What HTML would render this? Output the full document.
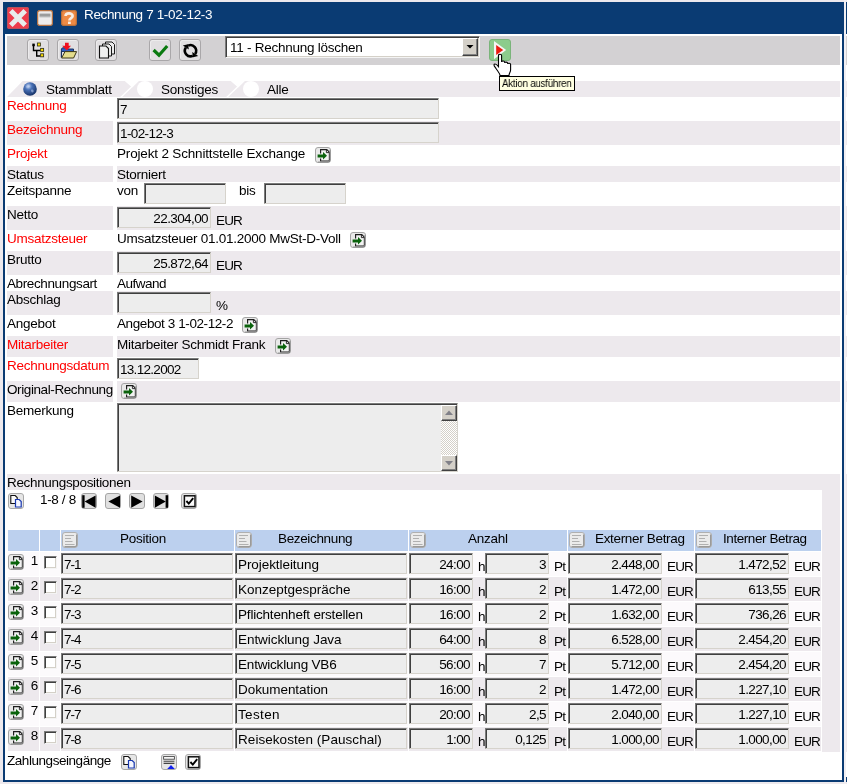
<!DOCTYPE html>
<html><head><meta charset="utf-8"><title>Rechnung</title><style>
*{box-sizing:border-box;margin:0;padding:0}
html,body{width:847px;height:784px;overflow:hidden;background:#ede9ed;}
body{position:relative;font-family:"Liberation Sans",sans-serif;font-size:13.5px;letter-spacing:-0.25px;color:#000;line-height:15px}
.a{position:absolute}
.t{position:absolute;will-change:transform;white-space:nowrap;line-height:15px;height:15px}
.r{color:#f00}
.in{position:absolute;will-change:transform;background:#ededed;border:1px solid;border-color:#7b7b7b #d6d3cc #d6d3cc #7b7b7b;box-shadow:inset 1px 1px 0 #3f3f3f;white-space:nowrap;overflow:hidden;line-height:15px;padding:3px 2px 0 2px;height:21px}
.num{text-align:right;letter-spacing:-0.6px}
.lav{position:absolute;background:#ede9ed}
.wh{position:absolute;background:#fff}
.btn{position:absolute;width:22px;height:22px;border:1px solid #a9a7a9;border-radius:3px;background:#e1dfe1;box-shadow:inset 1px 1px 0 #ecebec}
.ib{position:absolute;width:16px;height:15px}
.cb{position:absolute;width:13px;height:13px;background:#fff;border:1px solid;border-color:#7b7b7b #f4f4f4 #f4f4f4 #7b7b7b;box-shadow:inset 1px 1px 0 #3f3f3f, inset -1px -1px 0 #d4d0c8}
</style></head><body>
<div class="a" style="left:3px;top:2px;width:841px;height:780px;background:#0a3b73"></div>
<div class="a" style="left:5px;top:33.5px;width:837px;height:746.5px;background:#fff"></div>
<div class="a" style="left:844px;top:0;width:2px;height:784px;background:#f2eff2"></div>
<div class="a" style="left:846px;top:2px;width:1px;height:31.5px;background:#0a3b73"></div>
<div class="a" style="left:846px;top:33.5px;width:1px;height:746px;background:#fff"></div>
<div class="a" style="left:846px;top:36px;width:1px;height:28.5px;background:#d3d1d3"></div>
<div class="a" style="left:846px;top:777px;width:1px;height:5px;background:#0a3b73"></div>
<svg class="a" style="left:7px;top:7px" width="22" height="22" viewBox="0 0 22 22"><rect x="0" y="0" width="22" height="22" rx="2" fill="#ee3c4c"/><rect x="0.5" y="0.5" width="21" height="21" rx="2" fill="none" stroke="#b8525c" stroke-width="1"/><path d="M3.8 3.8 L18.2 18.2 M18.2 3.8 L3.8 18.2" stroke="#e9eded" stroke-width="5" stroke-linecap="butt"/></svg>
<svg class="a" style="left:37px;top:10px" width="16" height="16" viewBox="0 0 16 16"><rect x="0.6" y="0.6" width="14.8" height="14.8" rx="2" fill="#eeecec" stroke="#b87444" stroke-width="1.3"/><rect x="2.5" y="3.6" width="11" height="3.2" fill="#9c9c9c"/><rect x="2.5" y="6.8" width="11" height="1.2" fill="#d8d8d8"/></svg>
<svg class="a" style="left:61px;top:10px" width="16" height="16" viewBox="0 0 16 16"><rect x="0.6" y="0.6" width="14.8" height="14.8" rx="2" fill="#ee8a44" stroke="#b8703c" stroke-width="1.3"/><path d="M4.6 6 C4.6 2.6 11.6 2.6 11.6 5.9 C11.6 8.2 8.4 8 8.4 10.6" fill="none" stroke="#f6eee6" stroke-width="2.7"/><rect x="7" y="11.6" width="2.8" height="2.4" fill="#f6eee6"/></svg>
<div class="t" style="left:83.5px;top:7px;color:#fff;letter-spacing:-0.35px">Rechnung 7 1-02-12-3</div>
<div class="a" style="left:7px;top:36px;width:833px;height:28.5px;background:#d3d1d3"></div>
<div class="btn" style="left:27px;top:39px"></div><svg class="a" style="left:27px;top:39px" width="22" height="22" viewBox="0 0 22 22"><path d="M6.5 6 V11.5 H9.7 V17 H13.4 M9.7 11.5 H13.4" fill="none" stroke="#000" stroke-width="1.4"/><rect x="5.3" y="4.6" width="2.5" height="2.6" fill="#000"/><rect x="10.4" y="4" width="3" height="3" fill="#ffe000" stroke="#3a3a20" stroke-width="0.9"/><rect x="13.6" y="9.4" width="3" height="3" fill="#ffe000" stroke="#3a3a20" stroke-width="0.9"/><rect x="13.6" y="14.8" width="3" height="3" fill="#ffe000" stroke="#3a3a20" stroke-width="0.9"/></svg>
<div class="btn" style="left:57px;top:39px"></div><svg class="a" style="left:57px;top:39px" width="22" height="22" viewBox="0 0 22 22"><path d="M4.4 18.5 V10 L5.5 8.8 H9.5 L10.5 10 H16.5 V12.5 H4.4 Z" fill="#2a5cc0" stroke="#102858" stroke-width="0.9"/><path d="M4.6 19 L8 12.6 H19.6 L16.6 19 Z" fill="#e4dc8c" stroke="#3c3818" stroke-width="1"/><path d="M8 3.7 H11.7 V6.8 H14 L9.85 11.6 L5.2 6.8 H8 Z" fill="#f01020"/></svg>
<div class="btn" style="left:95px;top:39px"></div><svg class="a" style="left:95px;top:39px" width="22" height="22" viewBox="0 0 22 22"><path d="M10.5 3 H17 L19.5 5.5 V15 H10.5 Z" fill="#ececec" stroke="#1a1a1a" stroke-width="1"/><path d="M7.5 5 H14 L16.5 7.5 V17 H7.5 Z" fill="#ececec" stroke="#1a1a1a" stroke-width="1"/><path d="M4.5 7 H11 L13.5 9.5 V19 H4.5 Z" fill="#efefef" stroke="#101010" stroke-width="1.1"/></svg>
<div class="btn" style="left:149px;top:39px"></div><svg class="a" style="left:149px;top:39px" width="22" height="22" viewBox="0 0 22 22"><path d="M4.6 11 L10 16.2 L18.2 7" fill="none" stroke="#0a7a10" stroke-width="3.2"/></svg>
<div class="btn" style="left:179px;top:39px"></div><svg class="a" style="left:179px;top:39px" width="22" height="22" viewBox="0 0 22 22"><path d="M9.13 6.62 A5.6 5.6 0 0 1 16.09 14.91" fill="none" stroke="#000" stroke-width="2.6"/><path d="M13.87 16.78 A5.6 5.6 0 0 1 6.91 8.49" fill="none" stroke="#000" stroke-width="2.6"/><path d="M14.0 18.2 L19.2 16.9 L13.2 12.9 Z" fill="#000"/><path d="M9.0 5.2 L3.8 6.5 L9.8 10.5 Z" fill="#000"/></svg>
<div class="a" style="left:225px;top:36px;width:255px;height:22px;background:#fff;border:1px solid;border-color:#7b7b7b #f4f4f4 #f4f4f4 #7b7b7b;box-shadow:inset 1px 1px 0 #3f3f3f, inset -1px -1px 0 #d4d0c8"></div>
<div class="t" style="left:229.5px;top:39.5px">11 - Rechnung löschen</div>
<div class="a" style="left:462px;top:38px;width:16px;height:18px;background:#d4d0c8;border:1px solid;border-color:#fff #404040 #404040 #fff;box-shadow:inset -1px -1px 0 #808080"></div>
<svg class="a" style="left:462px;top:38px" width="16" height="18" viewBox="0 0 16 18"><path d="M4.5 7 H11.5 L8 10.5 Z" fill="#000"/></svg>
<svg class="a" style="left:489px;top:39px" width="22" height="22" viewBox="0 0 22 22"><rect x="0.5" y="0.5" width="21" height="21" rx="2.5" fill="#8ccc8c" stroke="#7ab47a" stroke-width="1"/><path d="M5 2 L17.2 11 L5 20.2 Z" fill="#f4f6f4"/><path d="M7.2 6 L14.2 11 L7.2 16 Z" fill="#e81c10"/></svg>
<div class="lav" style="left:7px;top:81px;width:833px;height:16px"></div>
<div class="lav" style="left:846px;top:81px;width:1px;height:16px"></div>
<div class="lav" style="left:846px;top:474px;width:1px;height:278px"></div>
<svg class="a" style="left:7px;top:81px" width="270" height="16" viewBox="0 0 270 16"><path d="M0 0 H15.7 L0 16 Z" fill="#fff"/><path d="M117.7 0 H131.6 L125.2 6.6 Z" fill="#fff"/><path d="M129.8 0 H131.8 L115.2 16 H113.2 Z" fill="#fff"/><circle cx="138" cy="8" r="8" fill="#fff"/><path d="M223.7 0 H237.6 L231.2 6.6 Z" fill="#fff"/><path d="M235.8 0 H237.8 L221.2 16 H219.2 Z" fill="#fff"/><circle cx="244" cy="8" r="8" fill="#fff"/></svg>
<svg class="a" style="left:23px;top:81.5px" width="14" height="14" viewBox="0 0 14 14"><defs><radialGradient id="gl" cx="0.38" cy="0.3" r="0.75"><stop offset="0" stop-color="#c8d8f4"/><stop offset="0.35" stop-color="#4a72b8"/><stop offset="1" stop-color="#122c60"/></radialGradient></defs><circle cx="7" cy="7" r="6.8" fill="url(#gl)"/><path d="M3 5 C4 3 6 2.5 7 4 C6 6 4.5 6.5 3 5 Z M8 8 C10 7 11 8 10.5 10 C9 11 8 10 8 8 Z" fill="#b8c8ec" opacity="0.55"/></svg>
<div class="t" style="left:46px;top:82px">Stammblatt</div>
<div class="t" style="left:161px;top:82px">Sonstiges</div>
<div class="t" style="left:267px;top:82px">Alle</div>
<div class="t r" style="left:7px;top:98px">Rechnung</div>
<div class="lav" style="left:846px;top:121px;width:1px;height:24px"></div>
<div class="lav" style="left:7px;top:121px;width:106px;height:24px"></div>
<div class="lav" style="left:117px;top:121px;width:723px;height:24px"></div>
<div class="t r" style="left:7px;top:122px">Bezeichnung</div>
<div class="t r" style="left:7px;top:146px">Projekt</div>
<div class="lav" style="left:846px;top:166px;width:1px;height:16px"></div>
<div class="lav" style="left:7px;top:166px;width:106px;height:16px"></div>
<div class="lav" style="left:117px;top:166px;width:723px;height:16px"></div>
<div class="t" style="left:7px;top:167px">Status</div>
<div class="t" style="left:7px;top:183px">Zeitspanne</div>
<div class="lav" style="left:846px;top:206px;width:1px;height:24px"></div>
<div class="lav" style="left:7px;top:206px;width:106px;height:24px"></div>
<div class="lav" style="left:117px;top:206px;width:723px;height:24px"></div>
<div class="t" style="left:7px;top:207px">Netto</div>
<div class="t r" style="left:7px;top:231px">Umsatzsteuer</div>
<div class="lav" style="left:846px;top:251px;width:1px;height:24px"></div>
<div class="lav" style="left:7px;top:251px;width:106px;height:24px"></div>
<div class="lav" style="left:117px;top:251px;width:723px;height:24px"></div>
<div class="t" style="left:7px;top:252px">Brutto</div>
<div class="t" style="left:7px;top:276px;letter-spacing:-0.38px">Abrechnungsart</div>
<div class="lav" style="left:846px;top:291px;width:1px;height:24px"></div>
<div class="lav" style="left:7px;top:291px;width:106px;height:24px"></div>
<div class="lav" style="left:117px;top:291px;width:723px;height:24px"></div>
<div class="t" style="left:7px;top:292px">Abschlag</div>
<div class="t" style="left:7px;top:316px">Angebot</div>
<div class="lav" style="left:846px;top:336px;width:1px;height:21px"></div>
<div class="lav" style="left:7px;top:336px;width:106px;height:21px"></div>
<div class="lav" style="left:117px;top:336px;width:723px;height:21px"></div>
<div class="t r" style="left:7px;top:337px">Mitarbeiter</div>
<div class="t r" style="left:7px;top:358px">Rechnungsdatum</div>
<div class="lav" style="left:846px;top:381px;width:1px;height:21px"></div>
<div class="lav" style="left:7px;top:381px;width:106px;height:21px"></div>
<div class="lav" style="left:117px;top:381px;width:723px;height:21px"></div>
<div class="t" style="left:7px;top:382px;letter-spacing:-0.4px">Original-Rechnung</div>
<div class="t" style="left:7px;top:403px">Bemerkung</div>
<div class="in" style="left:117px;top:98px;width:322px">7</div>
<div class="in" style="left:117px;top:122px;width:322px;letter-spacing:-0.6px">1-02-12-3</div>
<div class="t" style="left:117px;top:146px;letter-spacing:-0.17px">Projekt 2 Schnittstelle Exchange</div>
<svg class="a" style="left:315px;top:147px" width="16" height="16" viewBox="0 0 16 16"><rect x="0.5" y="0.5" width="15" height="15" rx="2.5" fill="#e9e9e9" stroke="#a4a4a4"/><path d="M5.6 6.4 V2.6 H11.8 L14.4 5.2 V14 H5.6 V11.4" fill="#f2f2f2" stroke="#1c1c1c" stroke-width="1.15"/><path d="M11.4 2.6 V5.6 H14.4" fill="none" stroke="#1c1c1c" stroke-width="0.9"/><path d="M2.6 7.4 H8 V5 L12 8.8 L8 12.6 V10.4 H2.6 Z" fill="#0a620c"/><path d="M14.9 3 V12.8 Q14.9 15 12.8 15 H3" fill="none" stroke="#8e8e8e" stroke-width="0.9"/></svg>
<div class="t" style="left:117px;top:167px">Storniert</div>
<div class="t" style="left:117px;top:183px">von</div>
<div class="in" style="left:144px;top:183px;width:82px"></div>
<div class="t" style="left:239px;top:183px">bis</div>
<div class="in" style="left:264px;top:183px;width:82px"></div>
<div class="in num" style="left:117px;top:207px;width:94px">22.304,00</div>
<div class="t" style="left:216px;top:213px;letter-spacing:-0.85px">EUR</div>
<div class="t" style="left:117px;top:231px">Umsatzsteuer 01.01.2000 MwSt-D-Voll</div>
<svg class="a" style="left:350px;top:232px" width="16" height="16" viewBox="0 0 16 16"><rect x="0.5" y="0.5" width="15" height="15" rx="2.5" fill="#e9e9e9" stroke="#a4a4a4"/><path d="M5.6 6.4 V2.6 H11.8 L14.4 5.2 V14 H5.6 V11.4" fill="#f2f2f2" stroke="#1c1c1c" stroke-width="1.15"/><path d="M11.4 2.6 V5.6 H14.4" fill="none" stroke="#1c1c1c" stroke-width="0.9"/><path d="M2.6 7.4 H8 V5 L12 8.8 L8 12.6 V10.4 H2.6 Z" fill="#0a620c"/><path d="M14.9 3 V12.8 Q14.9 15 12.8 15 H3" fill="none" stroke="#8e8e8e" stroke-width="0.9"/></svg>
<div class="in num" style="left:117px;top:252px;width:94px">25.872,64</div>
<div class="t" style="left:216px;top:258px;letter-spacing:-0.85px">EUR</div>
<div class="t" style="left:117px;top:276px;letter-spacing:-0.5px">Aufwand</div>
<div class="in" style="left:117px;top:292px;width:94px"></div>
<div class="t" style="left:216px;top:298px">%</div>
<div class="t" style="left:117px;top:316px;letter-spacing:-0.41px">Angebot 3 1-02-12-2</div>
<svg class="a" style="left:242px;top:317px" width="16" height="16" viewBox="0 0 16 16"><rect x="0.5" y="0.5" width="15" height="15" rx="2.5" fill="#e9e9e9" stroke="#a4a4a4"/><path d="M5.6 6.4 V2.6 H11.8 L14.4 5.2 V14 H5.6 V11.4" fill="#f2f2f2" stroke="#1c1c1c" stroke-width="1.15"/><path d="M11.4 2.6 V5.6 H14.4" fill="none" stroke="#1c1c1c" stroke-width="0.9"/><path d="M2.6 7.4 H8 V5 L12 8.8 L8 12.6 V10.4 H2.6 Z" fill="#0a620c"/><path d="M14.9 3 V12.8 Q14.9 15 12.8 15 H3" fill="none" stroke="#8e8e8e" stroke-width="0.9"/></svg>
<div class="t" style="left:117px;top:337px">Mitarbeiter Schmidt Frank</div>
<svg class="a" style="left:275px;top:338px" width="16" height="16" viewBox="0 0 16 16"><rect x="0.5" y="0.5" width="15" height="15" rx="2.5" fill="#e9e9e9" stroke="#a4a4a4"/><path d="M5.6 6.4 V2.6 H11.8 L14.4 5.2 V14 H5.6 V11.4" fill="#f2f2f2" stroke="#1c1c1c" stroke-width="1.15"/><path d="M11.4 2.6 V5.6 H14.4" fill="none" stroke="#1c1c1c" stroke-width="0.9"/><path d="M2.6 7.4 H8 V5 L12 8.8 L8 12.6 V10.4 H2.6 Z" fill="#0a620c"/><path d="M14.9 3 V12.8 Q14.9 15 12.8 15 H3" fill="none" stroke="#8e8e8e" stroke-width="0.9"/></svg>
<div class="in" style="left:117px;top:358px;width:82px;letter-spacing:-0.7px">13.12.2002</div>
<svg class="a" style="left:121px;top:383px" width="16" height="16" viewBox="0 0 16 16"><rect x="0.5" y="0.5" width="15" height="15" rx="2.5" fill="#e9e9e9" stroke="#a4a4a4"/><path d="M5.6 6.4 V2.6 H11.8 L14.4 5.2 V14 H5.6 V11.4" fill="#f2f2f2" stroke="#1c1c1c" stroke-width="1.15"/><path d="M11.4 2.6 V5.6 H14.4" fill="none" stroke="#1c1c1c" stroke-width="0.9"/><path d="M2.6 7.4 H8 V5 L12 8.8 L8 12.6 V10.4 H2.6 Z" fill="#0a620c"/><path d="M14.9 3 V12.8 Q14.9 15 12.8 15 H3" fill="none" stroke="#8e8e8e" stroke-width="0.9"/></svg>
<div class="in" style="left:117px;top:403px;width:341px;height:69px"></div>
<div class="a" style="left:441px;top:405px;width:16px;height:66px;background:conic-gradient(#fff 25%, #d4d0c8 0 50%, #fff 0 75%, #d4d0c8 0) 0 0/2px 2px"></div>
<div class="a" style="left:441px;top:405px;width:16px;height:16px;background:#d4d0c8;border:1px solid;border-color:#fff #404040 #404040 #fff;box-shadow:inset -1px -1px 0 #808080"></div>
<svg class="a" style="left:441px;top:405px" width="16" height="16" viewBox="0 0 16 16"><path d="M4 10 L8 5.5 L12 10 Z" fill="#808088"/></svg>
<div class="a" style="left:441px;top:455px;width:16px;height:16px;background:#d4d0c8;border:1px solid;border-color:#fff #404040 #404040 #fff;box-shadow:inset -1px -1px 0 #808080"></div>
<svg class="a" style="left:441px;top:455px" width="16" height="16" viewBox="0 0 16 16"><path d="M4 6 L8 10.5 L12 6 Z" fill="#808088"/></svg>
<div class="lav" style="left:7px;top:474px;width:833px;height:278px"></div>
<div class="t" style="left:7px;top:475px;letter-spacing:-0.33px">Rechnungspositionen</div>
<div class="wh" style="left:7px;top:490px;width:815px;height:262px"></div>
<svg class="a" style="left:8px;top:493px" width="16" height="16" viewBox="0 0 16 16"><rect x="0.5" y="0.5" width="15" height="15" rx="2.5" fill="#e6e6e6" stroke="#a8a8a8"/><path d="M2.8 2.5 H7.2 L9.2 4.5 V10.5 H2.8 Z" fill="#fafafa" stroke="#111" stroke-width="1.1"/><path d="M7.5 6.5 H11.2 L13.2 8.5 V14 H7.5 Z" fill="#f4f6ff" stroke="#1838b0" stroke-width="1.2"/></svg>
<div class="t" style="left:40px;top:491.5px;letter-spacing:-0.35px">1-8 / 8</div>
<svg class="a" style="left:81px;top:493px" width="16" height="16" viewBox="0 0 16 16"><rect x="0.5" y="0.5" width="15" height="15" rx="2.5" fill="#e0e0e0" stroke="#a4a4a4"/><rect x="1.2" y="2.2" width="2.4" height="12.6" fill="#000"/><path d="M14.6 2.4 V14.8 L3.6 8.6 Z" fill="#000"/></svg>
<svg class="a" style="left:105px;top:493px" width="16" height="16" viewBox="0 0 16 16"><rect x="0.5" y="0.5" width="15" height="15" rx="2.5" fill="#e0e0e0" stroke="#a4a4a4"/><path d="M15 2.4 V14.8 L3.4 8.6 Z" fill="#000"/></svg>
<svg class="a" style="left:129px;top:493px" width="16" height="16" viewBox="0 0 16 16"><rect x="0.5" y="0.5" width="15" height="15" rx="2.5" fill="#e0e0e0" stroke="#a4a4a4"/><path d="M2.2 2.4 V14.8 L13.6 8.6 Z" fill="#000"/></svg>
<svg class="a" style="left:153px;top:493px" width="16" height="16" viewBox="0 0 16 16"><rect x="0.5" y="0.5" width="15" height="15" rx="2.5" fill="#e0e0e0" stroke="#a4a4a4"/><rect x="12.6" y="2.2" width="2.4" height="12.6" fill="#000"/><path d="M1.8 2.4 V14.8 L12.8 8.6 Z" fill="#000"/></svg>
<svg class="a" style="left:181px;top:493px" width="16" height="16" viewBox="0 0 16 16"><rect x="0.5" y="0.5" width="15" height="15" rx="2.5" fill="#e6e6e6" stroke="#a8a8a8"/><rect x="3.4" y="2.8" width="10.6" height="10.8" fill="#fafafa" stroke="#111" stroke-width="1.5"/><path d="M5.4 8 L7.8 10.6 L12.2 5.2" fill="none" stroke="#000" stroke-width="1.9"/></svg>
<div class="a" style="left:8px;top:530px;width:31px;height:21px;background:#bcd0ee"></div>
<div class="a" style="left:40px;top:530px;width:20px;height:21px;background:#bcd0ee"></div>
<div class="a" style="left:61px;top:530px;width:173px;height:21px;background:#bcd0ee"></div>
<svg class="a" style="left:61.5px;top:532px" width="16" height="16" viewBox="0 0 16 16"><rect x="0.5" y="0.5" width="15" height="15" rx="2.5" fill="#ebebeb" stroke="#b0b0b0"/><path d="M14.6 2.5 V13 Q14.6 14.6 13 14.6 H2.5" fill="none" stroke="#9a9a9a" stroke-width="1.2"/><path d="M3 3.5 H12 M3 6.5 H9 M3 9.5 H10.5 M3 12.5 H12.5" stroke="#b0b0b0" stroke-width="1.2"/></svg>
<div class="t" style="left:119.5px;top:531px;letter-spacing:-0.25px">Position</div>
<div class="a" style="left:235px;top:530px;width:173px;height:21px;background:#bcd0ee"></div>
<svg class="a" style="left:235.5px;top:532px" width="16" height="16" viewBox="0 0 16 16"><rect x="0.5" y="0.5" width="15" height="15" rx="2.5" fill="#ebebeb" stroke="#b0b0b0"/><path d="M14.6 2.5 V13 Q14.6 14.6 13 14.6 H2.5" fill="none" stroke="#9a9a9a" stroke-width="1.2"/><path d="M3 3.5 H12 M3 6.5 H9 M3 9.5 H10.5 M3 12.5 H12.5" stroke="#b0b0b0" stroke-width="1.2"/></svg>
<div class="t" style="left:277.5px;top:531px;letter-spacing:-0.35px">Bezeichnung</div>
<div class="a" style="left:409px;top:530px;width:158px;height:21px;background:#bcd0ee"></div>
<svg class="a" style="left:409.5px;top:532px" width="16" height="16" viewBox="0 0 16 16"><rect x="0.5" y="0.5" width="15" height="15" rx="2.5" fill="#ebebeb" stroke="#b0b0b0"/><path d="M14.6 2.5 V13 Q14.6 14.6 13 14.6 H2.5" fill="none" stroke="#9a9a9a" stroke-width="1.2"/><path d="M3 3.5 H12 M3 6.5 H9 M3 9.5 H10.5 M3 12.5 H12.5" stroke="#b0b0b0" stroke-width="1.2"/></svg>
<div class="t" style="left:468px;top:531px;letter-spacing:-0.25px">Anzahl</div>
<div class="a" style="left:568px;top:530px;width:126px;height:21px;background:#bcd0ee"></div>
<svg class="a" style="left:568.5px;top:532px" width="16" height="16" viewBox="0 0 16 16"><rect x="0.5" y="0.5" width="15" height="15" rx="2.5" fill="#ebebeb" stroke="#b0b0b0"/><path d="M14.6 2.5 V13 Q14.6 14.6 13 14.6 H2.5" fill="none" stroke="#9a9a9a" stroke-width="1.2"/><path d="M3 3.5 H12 M3 6.5 H9 M3 9.5 H10.5 M3 12.5 H12.5" stroke="#b0b0b0" stroke-width="1.2"/></svg>
<div class="t" style="left:594.5px;top:531px;letter-spacing:-0.33px">Externer Betrag</div>
<div class="a" style="left:695px;top:530px;width:126px;height:21px;background:#bcd0ee"></div>
<svg class="a" style="left:695.5px;top:532px" width="16" height="16" viewBox="0 0 16 16"><rect x="0.5" y="0.5" width="15" height="15" rx="2.5" fill="#ebebeb" stroke="#b0b0b0"/><path d="M14.6 2.5 V13 Q14.6 14.6 13 14.6 H2.5" fill="none" stroke="#9a9a9a" stroke-width="1.2"/><path d="M3 3.5 H12 M3 6.5 H9 M3 9.5 H10.5 M3 12.5 H12.5" stroke="#b0b0b0" stroke-width="1.2"/></svg>
<div class="t" style="left:723px;top:531px;letter-spacing:-0.43px">Interner Betrag</div>
<div class="a" style="left:8px;top:552px;width:31px;height:24px;background:#fcfafc"></div>
<div class="a" style="left:40px;top:552px;width:20px;height:24px;background:#fcfafc"></div>
<div class="a" style="left:61px;top:552px;width:173px;height:24px;background:#fcfafc"></div>
<div class="a" style="left:235px;top:552px;width:173px;height:24px;background:#fcfafc"></div>
<div class="a" style="left:409px;top:552px;width:158px;height:24px;background:#fcfafc"></div>
<div class="a" style="left:568px;top:552px;width:126px;height:24px;background:#fcfafc"></div>
<div class="a" style="left:695px;top:552px;width:126px;height:24px;background:#fcfafc"></div>
<svg class="a" style="left:8px;top:554px" width="16" height="16" viewBox="0 0 16 16"><rect x="0.5" y="0.5" width="15" height="15" rx="2.5" fill="#e9e9e9" stroke="#a4a4a4"/><path d="M5.6 6.4 V2.6 H11.8 L14.4 5.2 V14 H5.6 V11.4" fill="#f2f2f2" stroke="#1c1c1c" stroke-width="1.15"/><path d="M11.4 2.6 V5.6 H14.4" fill="none" stroke="#1c1c1c" stroke-width="0.9"/><path d="M2.6 7.4 H8 V5 L12 8.8 L8 12.6 V10.4 H2.6 Z" fill="#0a620c"/><path d="M14.9 3 V12.8 Q14.9 15 12.8 15 H3" fill="none" stroke="#8e8e8e" stroke-width="0.9"/></svg>
<div class="t" style="left:27px;top:553px;width:11px;text-align:right">1</div>
<div class="cb" style="left:44px;top:556px"></div>
<div class="in" style="left:61px;top:553px;width:172px;letter-spacing:-1px">7-1</div>
<div class="in" style="left:235px;top:553px;width:172px;letter-spacing:-0.07px">Projektleitung</div>
<div class="in num" style="left:409px;top:553px;width:64px">24:00</div>
<div class="t" style="left:478px;top:558.5px">h</div>
<div class="in num" style="left:485px;top:553px;width:64px">3</div>
<div class="t" style="left:553.5px;top:558.5px;letter-spacing:-0.65px">Pt</div>
<div class="in num" style="left:568px;top:553px;width:94px">2.448,00</div>
<div class="t" style="left:666.5px;top:558.5px;letter-spacing:-0.85px">EUR</div>
<div class="in num" style="left:695px;top:553px;width:94px">1.472,52</div>
<div class="t" style="left:793.5px;top:558.5px;letter-spacing:-0.85px">EUR</div>
<div class="a" style="left:8px;top:577px;width:31px;height:24px;background:#ede9ed"></div>
<div class="a" style="left:40px;top:577px;width:20px;height:24px;background:#ede9ed"></div>
<div class="a" style="left:61px;top:577px;width:173px;height:24px;background:#ede9ed"></div>
<div class="a" style="left:235px;top:577px;width:173px;height:24px;background:#ede9ed"></div>
<div class="a" style="left:409px;top:577px;width:158px;height:24px;background:#ede9ed"></div>
<div class="a" style="left:568px;top:577px;width:126px;height:24px;background:#ede9ed"></div>
<div class="a" style="left:695px;top:577px;width:126px;height:24px;background:#ede9ed"></div>
<svg class="a" style="left:8px;top:579px" width="16" height="16" viewBox="0 0 16 16"><rect x="0.5" y="0.5" width="15" height="15" rx="2.5" fill="#e9e9e9" stroke="#a4a4a4"/><path d="M5.6 6.4 V2.6 H11.8 L14.4 5.2 V14 H5.6 V11.4" fill="#f2f2f2" stroke="#1c1c1c" stroke-width="1.15"/><path d="M11.4 2.6 V5.6 H14.4" fill="none" stroke="#1c1c1c" stroke-width="0.9"/><path d="M2.6 7.4 H8 V5 L12 8.8 L8 12.6 V10.4 H2.6 Z" fill="#0a620c"/><path d="M14.9 3 V12.8 Q14.9 15 12.8 15 H3" fill="none" stroke="#8e8e8e" stroke-width="0.9"/></svg>
<div class="t" style="left:27px;top:578px;width:11px;text-align:right">2</div>
<div class="cb" style="left:44px;top:581px"></div>
<div class="in" style="left:61px;top:578px;width:172px;letter-spacing:-1px">7-2</div>
<div class="in" style="left:235px;top:578px;width:172px;letter-spacing:0px">Konzeptgespräche</div>
<div class="in num" style="left:409px;top:578px;width:64px">16:00</div>
<div class="t" style="left:478px;top:583.5px">h</div>
<div class="in num" style="left:485px;top:578px;width:64px">2</div>
<div class="t" style="left:553.5px;top:583.5px;letter-spacing:-0.65px">Pt</div>
<div class="in num" style="left:568px;top:578px;width:94px">1.472,00</div>
<div class="t" style="left:666.5px;top:583.5px;letter-spacing:-0.85px">EUR</div>
<div class="in num" style="left:695px;top:578px;width:94px">613,55</div>
<div class="t" style="left:793.5px;top:583.5px;letter-spacing:-0.85px">EUR</div>
<div class="a" style="left:8px;top:602px;width:31px;height:24px;background:#fcfafc"></div>
<div class="a" style="left:40px;top:602px;width:20px;height:24px;background:#fcfafc"></div>
<div class="a" style="left:61px;top:602px;width:173px;height:24px;background:#fcfafc"></div>
<div class="a" style="left:235px;top:602px;width:173px;height:24px;background:#fcfafc"></div>
<div class="a" style="left:409px;top:602px;width:158px;height:24px;background:#fcfafc"></div>
<div class="a" style="left:568px;top:602px;width:126px;height:24px;background:#fcfafc"></div>
<div class="a" style="left:695px;top:602px;width:126px;height:24px;background:#fcfafc"></div>
<svg class="a" style="left:8px;top:604px" width="16" height="16" viewBox="0 0 16 16"><rect x="0.5" y="0.5" width="15" height="15" rx="2.5" fill="#e9e9e9" stroke="#a4a4a4"/><path d="M5.6 6.4 V2.6 H11.8 L14.4 5.2 V14 H5.6 V11.4" fill="#f2f2f2" stroke="#1c1c1c" stroke-width="1.15"/><path d="M11.4 2.6 V5.6 H14.4" fill="none" stroke="#1c1c1c" stroke-width="0.9"/><path d="M2.6 7.4 H8 V5 L12 8.8 L8 12.6 V10.4 H2.6 Z" fill="#0a620c"/><path d="M14.9 3 V12.8 Q14.9 15 12.8 15 H3" fill="none" stroke="#8e8e8e" stroke-width="0.9"/></svg>
<div class="t" style="left:27px;top:603px;width:11px;text-align:right">3</div>
<div class="cb" style="left:44px;top:606px"></div>
<div class="in" style="left:61px;top:603px;width:172px;letter-spacing:-1px">7-3</div>
<div class="in" style="left:235px;top:603px;width:172px;letter-spacing:-0.19px">Pflichtenheft erstellen</div>
<div class="in num" style="left:409px;top:603px;width:64px">16:00</div>
<div class="t" style="left:478px;top:608.5px">h</div>
<div class="in num" style="left:485px;top:603px;width:64px">2</div>
<div class="t" style="left:553.5px;top:608.5px;letter-spacing:-0.65px">Pt</div>
<div class="in num" style="left:568px;top:603px;width:94px">1.632,00</div>
<div class="t" style="left:666.5px;top:608.5px;letter-spacing:-0.85px">EUR</div>
<div class="in num" style="left:695px;top:603px;width:94px">736,26</div>
<div class="t" style="left:793.5px;top:608.5px;letter-spacing:-0.85px">EUR</div>
<div class="a" style="left:8px;top:627px;width:31px;height:24px;background:#ede9ed"></div>
<div class="a" style="left:40px;top:627px;width:20px;height:24px;background:#ede9ed"></div>
<div class="a" style="left:61px;top:627px;width:173px;height:24px;background:#ede9ed"></div>
<div class="a" style="left:235px;top:627px;width:173px;height:24px;background:#ede9ed"></div>
<div class="a" style="left:409px;top:627px;width:158px;height:24px;background:#ede9ed"></div>
<div class="a" style="left:568px;top:627px;width:126px;height:24px;background:#ede9ed"></div>
<div class="a" style="left:695px;top:627px;width:126px;height:24px;background:#ede9ed"></div>
<svg class="a" style="left:8px;top:629px" width="16" height="16" viewBox="0 0 16 16"><rect x="0.5" y="0.5" width="15" height="15" rx="2.5" fill="#e9e9e9" stroke="#a4a4a4"/><path d="M5.6 6.4 V2.6 H11.8 L14.4 5.2 V14 H5.6 V11.4" fill="#f2f2f2" stroke="#1c1c1c" stroke-width="1.15"/><path d="M11.4 2.6 V5.6 H14.4" fill="none" stroke="#1c1c1c" stroke-width="0.9"/><path d="M2.6 7.4 H8 V5 L12 8.8 L8 12.6 V10.4 H2.6 Z" fill="#0a620c"/><path d="M14.9 3 V12.8 Q14.9 15 12.8 15 H3" fill="none" stroke="#8e8e8e" stroke-width="0.9"/></svg>
<div class="t" style="left:27px;top:628px;width:11px;text-align:right">4</div>
<div class="cb" style="left:44px;top:631px"></div>
<div class="in" style="left:61px;top:628px;width:172px;letter-spacing:-1px">7-4</div>
<div class="in" style="left:235px;top:628px;width:172px;letter-spacing:-0.05px">Entwicklung Java</div>
<div class="in num" style="left:409px;top:628px;width:64px">64:00</div>
<div class="t" style="left:478px;top:633.5px">h</div>
<div class="in num" style="left:485px;top:628px;width:64px">8</div>
<div class="t" style="left:553.5px;top:633.5px;letter-spacing:-0.65px">Pt</div>
<div class="in num" style="left:568px;top:628px;width:94px">6.528,00</div>
<div class="t" style="left:666.5px;top:633.5px;letter-spacing:-0.85px">EUR</div>
<div class="in num" style="left:695px;top:628px;width:94px">2.454,20</div>
<div class="t" style="left:793.5px;top:633.5px;letter-spacing:-0.85px">EUR</div>
<div class="a" style="left:8px;top:652px;width:31px;height:24px;background:#fcfafc"></div>
<div class="a" style="left:40px;top:652px;width:20px;height:24px;background:#fcfafc"></div>
<div class="a" style="left:61px;top:652px;width:173px;height:24px;background:#fcfafc"></div>
<div class="a" style="left:235px;top:652px;width:173px;height:24px;background:#fcfafc"></div>
<div class="a" style="left:409px;top:652px;width:158px;height:24px;background:#fcfafc"></div>
<div class="a" style="left:568px;top:652px;width:126px;height:24px;background:#fcfafc"></div>
<div class="a" style="left:695px;top:652px;width:126px;height:24px;background:#fcfafc"></div>
<svg class="a" style="left:8px;top:654px" width="16" height="16" viewBox="0 0 16 16"><rect x="0.5" y="0.5" width="15" height="15" rx="2.5" fill="#e9e9e9" stroke="#a4a4a4"/><path d="M5.6 6.4 V2.6 H11.8 L14.4 5.2 V14 H5.6 V11.4" fill="#f2f2f2" stroke="#1c1c1c" stroke-width="1.15"/><path d="M11.4 2.6 V5.6 H14.4" fill="none" stroke="#1c1c1c" stroke-width="0.9"/><path d="M2.6 7.4 H8 V5 L12 8.8 L8 12.6 V10.4 H2.6 Z" fill="#0a620c"/><path d="M14.9 3 V12.8 Q14.9 15 12.8 15 H3" fill="none" stroke="#8e8e8e" stroke-width="0.9"/></svg>
<div class="t" style="left:27px;top:653px;width:11px;text-align:right">5</div>
<div class="cb" style="left:44px;top:656px"></div>
<div class="in" style="left:61px;top:653px;width:172px;letter-spacing:-1px">7-5</div>
<div class="in" style="left:235px;top:653px;width:172px;letter-spacing:-0.19px">Entwicklung VB6</div>
<div class="in num" style="left:409px;top:653px;width:64px">56:00</div>
<div class="t" style="left:478px;top:658.5px">h</div>
<div class="in num" style="left:485px;top:653px;width:64px">7</div>
<div class="t" style="left:553.5px;top:658.5px;letter-spacing:-0.65px">Pt</div>
<div class="in num" style="left:568px;top:653px;width:94px">5.712,00</div>
<div class="t" style="left:666.5px;top:658.5px;letter-spacing:-0.85px">EUR</div>
<div class="in num" style="left:695px;top:653px;width:94px">2.454,20</div>
<div class="t" style="left:793.5px;top:658.5px;letter-spacing:-0.85px">EUR</div>
<div class="a" style="left:8px;top:677px;width:31px;height:24px;background:#ede9ed"></div>
<div class="a" style="left:40px;top:677px;width:20px;height:24px;background:#ede9ed"></div>
<div class="a" style="left:61px;top:677px;width:173px;height:24px;background:#ede9ed"></div>
<div class="a" style="left:235px;top:677px;width:173px;height:24px;background:#ede9ed"></div>
<div class="a" style="left:409px;top:677px;width:158px;height:24px;background:#ede9ed"></div>
<div class="a" style="left:568px;top:677px;width:126px;height:24px;background:#ede9ed"></div>
<div class="a" style="left:695px;top:677px;width:126px;height:24px;background:#ede9ed"></div>
<svg class="a" style="left:8px;top:679px" width="16" height="16" viewBox="0 0 16 16"><rect x="0.5" y="0.5" width="15" height="15" rx="2.5" fill="#e9e9e9" stroke="#a4a4a4"/><path d="M5.6 6.4 V2.6 H11.8 L14.4 5.2 V14 H5.6 V11.4" fill="#f2f2f2" stroke="#1c1c1c" stroke-width="1.15"/><path d="M11.4 2.6 V5.6 H14.4" fill="none" stroke="#1c1c1c" stroke-width="0.9"/><path d="M2.6 7.4 H8 V5 L12 8.8 L8 12.6 V10.4 H2.6 Z" fill="#0a620c"/><path d="M14.9 3 V12.8 Q14.9 15 12.8 15 H3" fill="none" stroke="#8e8e8e" stroke-width="0.9"/></svg>
<div class="t" style="left:27px;top:678px;width:11px;text-align:right">6</div>
<div class="cb" style="left:44px;top:681px"></div>
<div class="in" style="left:61px;top:678px;width:172px;letter-spacing:-1px">7-6</div>
<div class="in" style="left:235px;top:678px;width:172px;letter-spacing:-0.06px">Dokumentation</div>
<div class="in num" style="left:409px;top:678px;width:64px">16:00</div>
<div class="t" style="left:478px;top:683.5px">h</div>
<div class="in num" style="left:485px;top:678px;width:64px">2</div>
<div class="t" style="left:553.5px;top:683.5px;letter-spacing:-0.65px">Pt</div>
<div class="in num" style="left:568px;top:678px;width:94px">1.472,00</div>
<div class="t" style="left:666.5px;top:683.5px;letter-spacing:-0.85px">EUR</div>
<div class="in num" style="left:695px;top:678px;width:94px">1.227,10</div>
<div class="t" style="left:793.5px;top:683.5px;letter-spacing:-0.85px">EUR</div>
<div class="a" style="left:8px;top:702px;width:31px;height:24px;background:#fcfafc"></div>
<div class="a" style="left:40px;top:702px;width:20px;height:24px;background:#fcfafc"></div>
<div class="a" style="left:61px;top:702px;width:173px;height:24px;background:#fcfafc"></div>
<div class="a" style="left:235px;top:702px;width:173px;height:24px;background:#fcfafc"></div>
<div class="a" style="left:409px;top:702px;width:158px;height:24px;background:#fcfafc"></div>
<div class="a" style="left:568px;top:702px;width:126px;height:24px;background:#fcfafc"></div>
<div class="a" style="left:695px;top:702px;width:126px;height:24px;background:#fcfafc"></div>
<svg class="a" style="left:8px;top:704px" width="16" height="16" viewBox="0 0 16 16"><rect x="0.5" y="0.5" width="15" height="15" rx="2.5" fill="#e9e9e9" stroke="#a4a4a4"/><path d="M5.6 6.4 V2.6 H11.8 L14.4 5.2 V14 H5.6 V11.4" fill="#f2f2f2" stroke="#1c1c1c" stroke-width="1.15"/><path d="M11.4 2.6 V5.6 H14.4" fill="none" stroke="#1c1c1c" stroke-width="0.9"/><path d="M2.6 7.4 H8 V5 L12 8.8 L8 12.6 V10.4 H2.6 Z" fill="#0a620c"/><path d="M14.9 3 V12.8 Q14.9 15 12.8 15 H3" fill="none" stroke="#8e8e8e" stroke-width="0.9"/></svg>
<div class="t" style="left:27px;top:703px;width:11px;text-align:right">7</div>
<div class="cb" style="left:44px;top:706px"></div>
<div class="in" style="left:61px;top:703px;width:172px;letter-spacing:-1px">7-7</div>
<div class="in" style="left:235px;top:703px;width:172px;letter-spacing:0.35px">Testen</div>
<div class="in num" style="left:409px;top:703px;width:64px">20:00</div>
<div class="t" style="left:478px;top:708.5px">h</div>
<div class="in num" style="left:485px;top:703px;width:64px">2,5</div>
<div class="t" style="left:553.5px;top:708.5px;letter-spacing:-0.65px">Pt</div>
<div class="in num" style="left:568px;top:703px;width:94px">2.040,00</div>
<div class="t" style="left:666.5px;top:708.5px;letter-spacing:-0.85px">EUR</div>
<div class="in num" style="left:695px;top:703px;width:94px">1.227,10</div>
<div class="t" style="left:793.5px;top:708.5px;letter-spacing:-0.85px">EUR</div>
<div class="a" style="left:8px;top:727px;width:31px;height:24px;background:#ede9ed"></div>
<div class="a" style="left:40px;top:727px;width:20px;height:24px;background:#ede9ed"></div>
<div class="a" style="left:61px;top:727px;width:173px;height:24px;background:#ede9ed"></div>
<div class="a" style="left:235px;top:727px;width:173px;height:24px;background:#ede9ed"></div>
<div class="a" style="left:409px;top:727px;width:158px;height:24px;background:#ede9ed"></div>
<div class="a" style="left:568px;top:727px;width:126px;height:24px;background:#ede9ed"></div>
<div class="a" style="left:695px;top:727px;width:126px;height:24px;background:#ede9ed"></div>
<svg class="a" style="left:8px;top:729px" width="16" height="16" viewBox="0 0 16 16"><rect x="0.5" y="0.5" width="15" height="15" rx="2.5" fill="#e9e9e9" stroke="#a4a4a4"/><path d="M5.6 6.4 V2.6 H11.8 L14.4 5.2 V14 H5.6 V11.4" fill="#f2f2f2" stroke="#1c1c1c" stroke-width="1.15"/><path d="M11.4 2.6 V5.6 H14.4" fill="none" stroke="#1c1c1c" stroke-width="0.9"/><path d="M2.6 7.4 H8 V5 L12 8.8 L8 12.6 V10.4 H2.6 Z" fill="#0a620c"/><path d="M14.9 3 V12.8 Q14.9 15 12.8 15 H3" fill="none" stroke="#8e8e8e" stroke-width="0.9"/></svg>
<div class="t" style="left:27px;top:728px;width:11px;text-align:right">8</div>
<div class="cb" style="left:44px;top:731px"></div>
<div class="in" style="left:61px;top:728px;width:172px;letter-spacing:-1px">7-8</div>
<div class="in" style="left:235px;top:728px;width:172px;letter-spacing:0.06px">Reisekosten (Pauschal)</div>
<div class="in num" style="left:409px;top:728px;width:64px">1:00</div>
<div class="t" style="left:478px;top:733.5px">h</div>
<div class="in num" style="left:485px;top:728px;width:64px">0,125</div>
<div class="t" style="left:553.5px;top:733.5px;letter-spacing:-0.65px">Pt</div>
<div class="in num" style="left:568px;top:728px;width:94px">1.000,00</div>
<div class="t" style="left:666.5px;top:733.5px;letter-spacing:-0.85px">EUR</div>
<div class="in num" style="left:695px;top:728px;width:94px">1.000,00</div>
<div class="t" style="left:793.5px;top:733.5px;letter-spacing:-0.85px">EUR</div>
<div class="t" style="left:7px;top:753px;letter-spacing:-0.45px">Zahlungseingänge</div>
<svg class="a" style="left:121px;top:754px" width="16" height="16" viewBox="0 0 16 16"><rect x="0.5" y="0.5" width="15" height="15" rx="2.5" fill="#e6e6e6" stroke="#a8a8a8"/><path d="M2.8 2.5 H7.2 L9.2 4.5 V10.5 H2.8 Z" fill="#fafafa" stroke="#111" stroke-width="1.1"/><path d="M7.5 6.5 H11.2 L13.2 8.5 V14 H7.5 Z" fill="#f4f6ff" stroke="#1838b0" stroke-width="1.2"/></svg>
<svg class="a" style="left:161px;top:754px" width="16" height="16" viewBox="0 0 16 16"><rect x="0.5" y="0.5" width="15" height="15" rx="2.5" fill="#e6e6e6" stroke="#a8a8a8"/><rect x="2.6" y="2.6" width="10.8" height="2.6" fill="#fff" stroke="#444" stroke-width="0.9"/><path d="M2.6 7.2 H13.4 M2.6 9.4 H13.4" stroke="#444" stroke-width="1.1"/><path d="M6.2 15 L10 11 L13.8 15 Z" fill="#1020f0"/></svg>
<svg class="a" style="left:185px;top:754px" width="16" height="16" viewBox="0 0 16 16"><rect x="0.5" y="0.5" width="15" height="15" rx="2.5" fill="#e6e6e6" stroke="#a8a8a8"/><rect x="3.4" y="2.8" width="10.6" height="10.8" fill="#fafafa" stroke="#111" stroke-width="1.5"/><path d="M5.4 8 L7.8 10.6 L12.2 5.2" fill="none" stroke="#000" stroke-width="1.9"/></svg>
<svg class="a" style="left:491px;top:53px" width="24" height="24" viewBox="0 0 24 24"><path d="M7.5 2.5 C7.5 0.8 10.6 0.8 10.6 2.5 V9 C10.6 7.6 13.6 7.6 13.7 9.2 V10 C13.7 8.8 16.6 8.8 16.7 10.3 V11 C16.7 9.9 19.6 10 19.6 11.5 V17 C19.6 19 18 20 18 22.5 H9 C9 20.5 7 18.5 5 15.5 C3.7 13.5 2.2 12.3 3.3 11.2 C4.6 10.2 6.2 12 7.5 13.6 Z" fill="#fff" stroke="#000" stroke-width="1.1"/></svg>
<div class="a" style="left:499px;top:76px;width:76px;height:15px;background:#ffffe1;border:1px solid #000"></div>
<div class="t" style="left:502px;top:76px;font-size:11px;transform-origin:0 0;transform:scaleX(0.885)">Aktion ausführen</div>
</body></html>
